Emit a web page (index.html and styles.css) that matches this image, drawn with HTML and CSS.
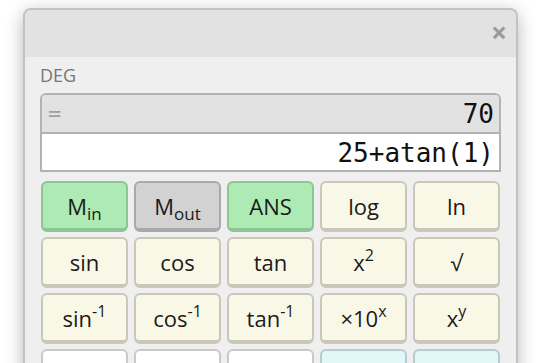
FILE: index.html
```html
<!DOCTYPE html>
<html lang="en">
<head>
    <meta charset="UTF-8">
    <title>Calculator</title>
    <link rel="stylesheet" href="styles.css">
</head>
<body>
    <div class="window">
        <div class="titlebar">
            <span class="close">&times;</span>
        </div>
        <div class="calc">
            <div class="mode">DEG</div>
            <div class="display">
                <div class="result"><span class="eq">=</span><span class="value">70</span></div>
                <div class="input">25+atan(1)</div>
            </div>
            <div class="keys">
                <button class="key green">M<sub>in</sub></button>
                <button class="key gray">M<sub>out</sub></button>
                <button class="key green">ANS</button>
                <button class="key">log</button>
                <button class="key">ln</button>

                <button class="key">sin</button>
                <button class="key">cos</button>
                <button class="key">tan</button>
                <button class="key">x<sup>2</sup></button>
                <button class="key">&radic;</button>

                <button class="key">sin<sup>-1</sup></button>
                <button class="key">cos<sup>-1</sup></button>
                <button class="key">tan<sup>-1</sup></button>
                <button class="key">&times;10<sup>x</sup></button>
                <button class="key">x<sup>y</sup></button>

                <!-- next row is cut off by the window -->
                <button class="key white"></button>
                <button class="key white"></button>
                <button class="key white"></button>
                <button class="key cyan"></button>
                <button class="key cyan"></button>
            </div>
        </div>
    </div>
</body>
</html>
```

FILE: styles.css
```css
body {
    margin: 0;
    background-color: #fff;
    font-family: "Open Sans", sans-serif;
    overflow: hidden;
}
.window {
    margin: 8px 0 0 23px;
    width: 491px;
    border: 2px solid #c2c2c2;
    border-radius: 8px;
    background-color: #efefef;
    box-shadow: 0 4px 18px rgba(0, 0, 0, 0.28);
    overflow: hidden;
}
.titlebar {
    height: 47px;
    background-color: #e2e2e2;
    display: flex;
    justify-content: flex-end;
    align-items: center;
    padding: 0 9px;
}
.close {
    color: #9a9a9a;
    font-size: 28px;
    font-weight: bold;
    line-height: 1;
    margin-top: -3px;
}
.calc {
    padding: 6px 15px 20px 15px;
}
.mode {
    color: #767676;
    font-size: 18px;
    line-height: 24px;
    margin-bottom: 6px;
}
.display {
    border: 2px solid #b3b3b3;
    border-radius: 6px 6px 0 0;
    font-family: "DejaVu Sans Mono", monospace;
    overflow: hidden;
}
.result {
    height: 37px;
    background-color: #e2e2e2;
    display: flex;
    justify-content: space-between;
    align-items: center;
    padding: 0 5px 0 6px;
    font-size: 26px;
    color: #111;
}
.eq {
    color: #a0a0a0;
    font-size: 22px;
}
.input {
    height: 36px;
    background-color: #fff;
    border-top: 2px solid #b3b3b3;
    text-align: right;
    padding: 0 5px;
    font-size: 26px;
    line-height: 38px;
    color: #111;
}
.keys {
    display: grid;
    grid-template-columns: repeat(5, 1fr);
    grid-auto-rows: 51px;
    gap: 5px 6px;
    margin-top: 9px;
    padding: 0 1px;
}
.key {
    font-family: "Open Sans", sans-serif;
    font-size: 22px;
    color: #1a1a1a;
    background-color: #f9f8e7;
    border: 2px solid #c9c7b7;
    border-bottom-width: 4px;
    border-radius: 6px;
    padding: 0;
}
.key sub {
    font-size: 17px;
    vertical-align: -5px;
    line-height: 0;
}
.key sup {
    font-size: 16px;
    vertical-align: 10px;
    line-height: 0;
}
.green {
    background-color: #aeeab4;
    border-color: #8dc594;
}
.gray {
    background-color: #d2d2d2;
    border-color: #a9a9a9;
}
.white {
    background-color: #fff;
    border-color: #c9c9c9;
}
.cyan {
    background-color: #e2f7f7;
    border-color: #b7cccc;
}
```
